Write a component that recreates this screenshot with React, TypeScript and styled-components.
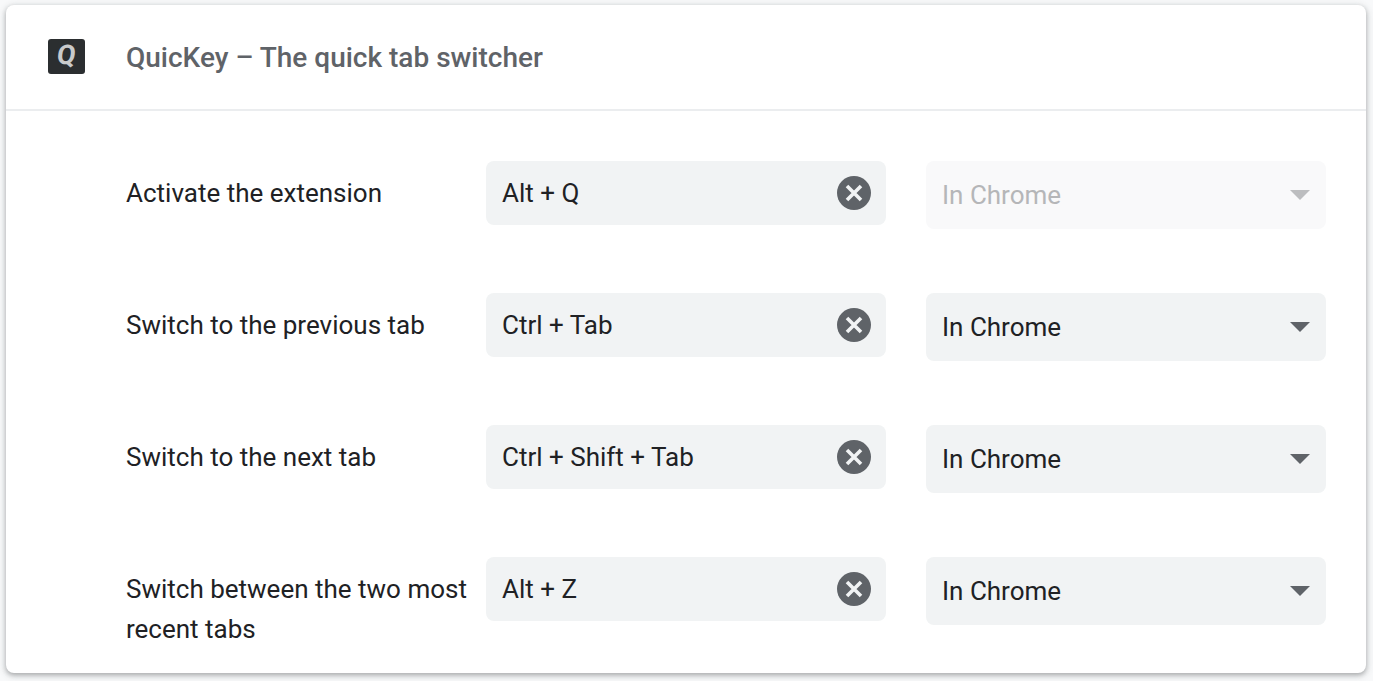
import React from "react";
import styled, { createGlobalStyle } from "styled-components";

const Global = createGlobalStyle`
  html, body { margin: 0; padding: 0; background: #f8f9fa; height: 681px; overflow: hidden; }
  body { font-family: Roboto, "Liberation Sans", sans-serif; }
`;

const Page = styled.div`
  padding: 5px 7px 0 6px;
`;

const Card = styled.section`
  height: 668px;
  box-sizing: border-box;
  background: #fff;
  border-radius: 8px;
  overflow: hidden;
  box-shadow: 0 2px 4px rgba(60, 64, 67, 0.3), 0 2px 6px 2px rgba(60, 64, 67, 0.15);
`;

const CardFrame = styled.div`
  height: 100%;
  display: flex;
  flex-direction: column;
`;

const Header = styled.header`
  height: 106px;
  flex: none;
  display: flex;
  align-items: center;
  box-sizing: border-box;
  padding: 0 0 2px 42px;
  border-bottom: 2px solid #ebedef;
`;

const Logo = styled.div`
  width: 37px;
  height: 35px;
  margin-right: 41px;
  margin-top: 1px;
  border-radius: 3px;
  background: #2b2e30;
  color: #c9cacb;
  font: 700 27px/35px Roboto, sans-serif;
  text-align: center;
`;

const LogoLetter = styled.span`
  display: inline-block;
  transform: translateY(-1px) skewX(-7deg);
`;

const Title = styled.h1`
  margin: 4px 0 0;
  font: 500 28px/40px Roboto, sans-serif;
  color: #5f6368;
`;

const Rows = styled.div`
  padding: 50px 40px 0 120px;
  display: flex;
  flex-direction: column;
  gap: 64px;
`;

const Row = styled.div`
  display: flex;
  align-items: flex-start;
  height: 68px;
`;

const Label = styled.div`
  width: 346px;
  margin-right: 14px;
  padding-top: 12px;
  font: 400 26px/40px Roboto, sans-serif;
  color: #202124;
`;

const ShortcutField = styled.div`
  width: 400px;
  height: 64px;
  box-sizing: border-box;
  padding: 0 15px 0 16px;
  display: flex;
  align-items: center;
  justify-content: space-between;
  background: #f1f3f4;
  border-radius: 8px;
  font: 400 26px/40px Roboto, sans-serif;
  color: #202124;
`;

const Select = styled.div<{ $disabled?: boolean }>`
  width: 400px;
  height: 68px;
  margin-left: 40px;
  box-sizing: border-box;
  padding: 0 16px;
  display: flex;
  align-items: center;
  justify-content: space-between;
  background: ${(p) => (p.$disabled ? "#f9f9fa" : "#f1f3f4")};
  border-radius: 8px;
  font: 400 26px/40px Roboto, sans-serif;
  color: ${(p) => (p.$disabled ? "#b5b6b8" : "#202124")};
`;

const ClearIcon = () => (
  <svg width="34" height="34" viewBox="0 0 34 34" aria-hidden="true">
    <circle cx="17" cy="17" r="17" fill="#5f6368" />
    <path d="M10 10 L24 24 M24 10 L10 24" stroke="#f1f3f4" strokeWidth="3.6" fill="none" />
  </svg>
);

const Arrow = ({ color }: { color: string }) => (
  <svg width="20" height="10" viewBox="0 0 20 10" aria-hidden="true">
    <path d="M0 0 H20 L10 10 Z" fill={color} />
  </svg>
);

const rows = [
  { label: "Activate the extension", keys: "Alt + Q", disabled: true },
  { label: "Switch to the previous tab", keys: "Ctrl + Tab" },
  { label: "Switch to the next tab", keys: "Ctrl + Shift + Tab" },
  { label: "Switch between the two most recent tabs", keys: "Alt + Z" },
];

export default function App() {
  return (
    <Page>
      <Global />
      <Card>
        <CardFrame>
          <Header>
            <Logo><LogoLetter>Q</LogoLetter></Logo>
            <Title>QuicKey – The quick tab switcher</Title>
          </Header>
          <Rows>
            {rows.map((r) => (
              <Row key={r.label}>
                <Label>{r.label}</Label>
                <ShortcutField>
                  <span>{r.keys}</span>
                  <ClearIcon />
                </ShortcutField>
                <Select $disabled={r.disabled}>
                  <span>In Chrome</span>
                  <Arrow color={r.disabled ? "#bcbdbf" : "#5f6368"} />
                </Select>
              </Row>
            ))}
          </Rows>
        </CardFrame>
      </Card>
    </Page>
  );
}
